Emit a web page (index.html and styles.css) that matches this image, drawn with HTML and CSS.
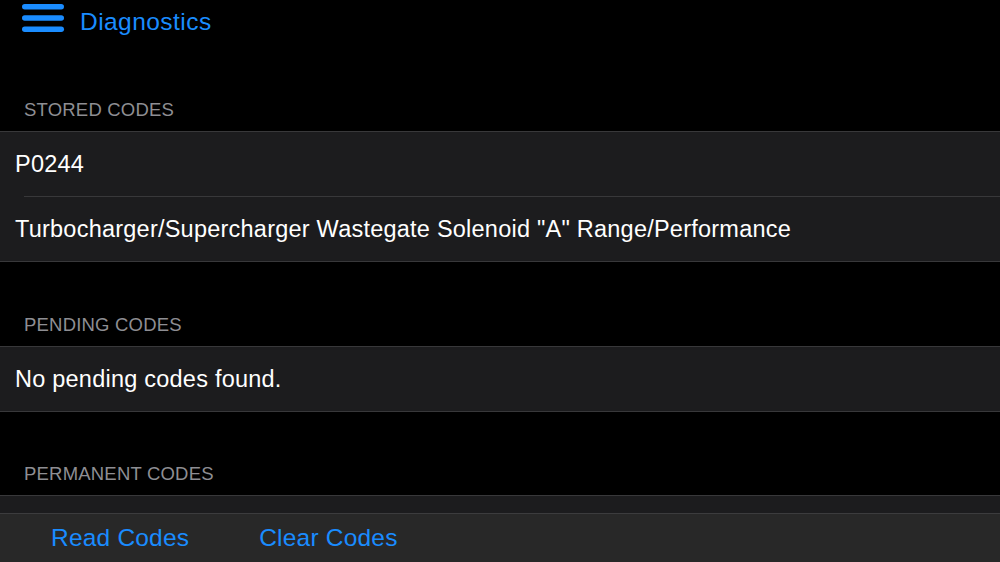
FILE: index.html
```html
<!DOCTYPE html>
<html>
<head>
<meta charset="utf-8">
<link rel="stylesheet" href="styles.css">
</head>
<body>
<div class="app">
  <header class="nav">
    <svg class="menu" width="44" height="30" viewBox="0 0 44 30">
      <rect x="0" y="1" width="42" height="5.5" rx="2.75" fill="#1a8cff"/>
      <rect x="0" y="12.2" width="42" height="5.5" rx="2.75" fill="#1a8cff"/>
      <rect x="0" y="23.4" width="42" height="5.5" rx="2.75" fill="#1a8cff"/>
    </svg>
    <span class="title">Diagnostics</span>
  </header>
  <main class="content">
    <div class="section-header">STORED CODES</div>
    <div class="group">
      <div class="row">P0244</div>
      <div class="sep"></div>
      <div class="row">Turbocharger/Supercharger Wastegate Solenoid "A" Range/Performance</div>
    </div>
    <div class="section-header">PENDING CODES</div>
    <div class="group">
      <div class="row">No pending codes found.</div>
    </div>
    <div class="section-header tight">PERMANENT CODES</div>
    <div class="group">
      <div class="row"></div>
    </div>
  </main>
  <footer class="toolbar">
    <span class="tool-btn">Read Codes</span>
    <span class="tool-btn">Clear Codes</span>
  </footer>
</div>
</body>
</html>
```

FILE: styles.css
```css
html, body {
  margin: 0;
  padding: 0;
  background: #000;
}
body {
  font-family: "Liberation Sans", Arial, sans-serif;
  color: #fff;
}
.app {
  width: 1000px;
  height: 562px;
  display: flex;
  flex-direction: column;
  overflow: hidden;
}
.nav {
  height: 47px;
  flex: none;
  display: flex;
  align-items: flex-start;
  padding-left: 22px;
}
.menu {
  margin-top: 3px;
  display: block;
}
.title {
  margin-left: 14px;
  font-size: 24.5px;
  letter-spacing: 0.45px;
  line-height: 26px;
  margin-top: 9px;
  color: #1a8cff;
}
.content {
  flex: 1;
  overflow: hidden;
}
.section-header {
  padding: 52px 0 10px 24px;
  font-size: 18.5px;
  letter-spacing: 0.2px;
  line-height: 22px;
  color: #8e8e93;
}
.section-header.tight {
  padding-top: 51px;
}
.group {
  background: #1c1c1e;
  border-top: 1px solid #38383a;
  border-bottom: 1px solid #38383a;
}
.row {
  height: 64px;
  line-height: 64px;
  padding-left: 15px;
  font-size: 23.5px;
  letter-spacing: 0.23px;
  white-space: nowrap;
}
.sep {
  height: 1px;
  margin-left: 24px;
  background: #38383a;
}
.toolbar {
  height: 48px;
  flex: none;
  background: #282828;
  border-top: 1px solid #3c3c3e;
  display: flex;
  align-items: center;
  padding-left: 51px;
  gap: 70px;
}
.tool-btn {
  font-size: 24.5px;
  letter-spacing: 0.2px;
  line-height: 28px;
  color: #1a8cff;
}
```
